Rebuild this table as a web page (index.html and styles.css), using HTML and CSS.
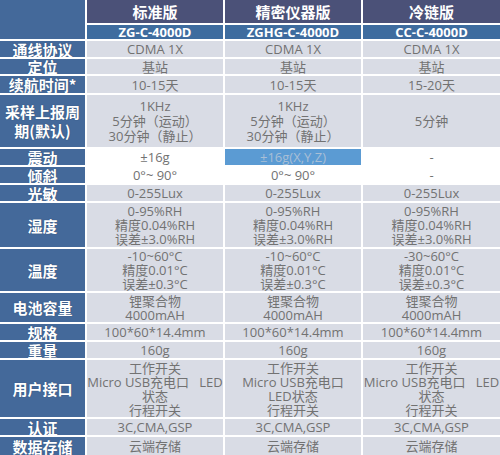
FILE: index.html
```html
<!DOCTYPE html>
<html lang="zh">
<head>
<meta charset="utf-8">
<title>产品参数对比</title>
<link rel="stylesheet" href="styles.css">
</head>
<body>
<div class="table">
  <div class="corner"></div>
  <div class="head">标准版</div>
  <div class="head">精密仪器版</div>
  <div class="head">冷链版</div>
  <div class="model">ZG-C-4000D</div>
  <div class="model">ZGHG-C-4000D</div>
  <div class="model">CC-C-4000D</div>

  <div class="label">通线协议</div>
  <div class="cell">CDMA 1X</div>
  <div class="cell">CDMA 1X</div>
  <div class="cell">CDMA 1X</div>

  <div class="label">定位</div>
  <div class="cell">基站</div>
  <div class="cell">基站</div>
  <div class="cell">基站</div>

  <div class="label">续航时间*</div>
  <div class="cell">10-15天</div>
  <div class="cell">10-15天</div>
  <div class="cell">15-20天</div>

  <div class="label wrap">采样上报周期(默认)</div>
  <div class="cell tall">1KHz<br>5分钟（运动）<br>30分钟（静止）</div>
  <div class="cell tall">1KHz<br>5分钟（运动）<br>30分钟（静止）</div>
  <div class="cell">5分钟</div>

  <div class="label">震动</div>
  <div class="cell white">±16g</div>
  <div class="cell hl">±16g(X,Y,Z)</div>
  <div class="cell white">-</div>

  <div class="label">倾斜</div>
  <div class="cell white">0°~ 90°</div>
  <div class="cell white">0°~ 90°</div>
  <div class="cell white">-</div>

  <div class="label">光敏</div>
  <div class="cell">0-255Lux</div>
  <div class="cell">0-255Lux</div>
  <div class="cell">0-255Lux</div>

  <div class="label">湿度</div>
  <div class="cell">0-95%RH<br>精度0.04%RH<br>误差±3.0%RH</div>
  <div class="cell">0-95%RH<br>精度0.04%RH<br>误差±3.0%RH</div>
  <div class="cell">0-95%RH<br>精度0.04%RH<br>误差±3.0%RH</div>

  <div class="label">温度</div>
  <div class="cell">-10~60°C<br>精度0.01°C<br>误差±0.3°C</div>
  <div class="cell">-10~60°C<br>精度0.01°C<br>误差±0.3°C</div>
  <div class="cell">-30~60°C<br>精度0.01°C<br>误差±0.3°C</div>

  <div class="label">电池容量</div>
  <div class="cell">锂聚合物<br>4000mAH</div>
  <div class="cell">锂聚合物<br>4000mAH</div>
  <div class="cell">锂聚合物<br>4000mAH</div>

  <div class="label">规格</div>
  <div class="cell">100*60*14.4mm</div>
  <div class="cell">100*60*14.4mm</div>
  <div class="cell">100*60*14.4mm</div>

  <div class="label">重量</div>
  <div class="cell">160g</div>
  <div class="cell">160g</div>
  <div class="cell">160g</div>

  <div class="label">用户接口</div>
  <div class="cell">工作开关<br>Micro USB充电口&nbsp;&nbsp; LED<br>状态<br>行程开关</div>
  <div class="cell">工作开关<br>Micro USB充电口<br>LED状态<br>行程开关</div>
  <div class="cell">工作开关<br>Micro USB充电口&nbsp;&nbsp; LED<br>状态<br>行程开关</div>

  <div class="label">认证</div>
  <div class="cell">3C,CMA,GSP</div>
  <div class="cell">3C,CMA,GSP</div>
  <div class="cell">3C,CMA,GSP</div>

  <div class="label">数据存储</div>
  <div class="cell">云端存储</div>
  <div class="cell">云端存储</div>
  <div class="cell">云端存储</div>
</div>
</body>
</html>
```

FILE: styles.css
```css
html, body {
  margin: 0;
  padding: 0;
  background: #ffffff;
}

.table {
  width: 500px;
  height: 455px;
  display: grid;
  grid-template-columns: 85px 136px 136px 137px;
  grid-template-rows: 23px 14px 16px 15px 17px 52px 16px 16px 16px 44px 42px 29px 16px 16px 57px 16px 18px;
  gap: 2px;
  font-family: "Open Sans", "Noto Sans CJK SC", sans-serif;
}

.table > div {
  display: flex;
  align-items: center;
  justify-content: center;
  text-align: center;
  overflow: hidden;
}

.corner {
  grid-row: span 2;
  background: #44699a;
}

.head {
  background: #4b5178;
  color: #ffffff;
  font-family: "Noto Sans CJK SC", sans-serif;
  font-weight: bold;
  font-size: 15px;
  line-height: 20px;
}

.model {
  background: #3e6c9f;
  color: #ffffff;
  font-weight: bold;
  font-size: 13px;
  line-height: 14px;
}

.label {
  background: #44699a;
  color: #ffffff;
  font-family: "Noto Sans CJK SC", sans-serif;
  font-weight: bold;
  font-size: 15px;
  line-height: 19px;
  text-shadow: 0 0 1px rgba(20, 40, 70, 0.6);
}

.label.wrap {
  padding: 0 2px;
}

.cell {
  background: #d9dce5;
  color: #727272;
  font-size: 13px;
  line-height: 14px;
  white-space: nowrap;
}

.cell.tall {
  line-height: 15px;
}

.cell.white {
  background: #ffffff;
}

.cell.hl {
  background: #5b9bd3;
  color: #a9bfd6;
}
```
